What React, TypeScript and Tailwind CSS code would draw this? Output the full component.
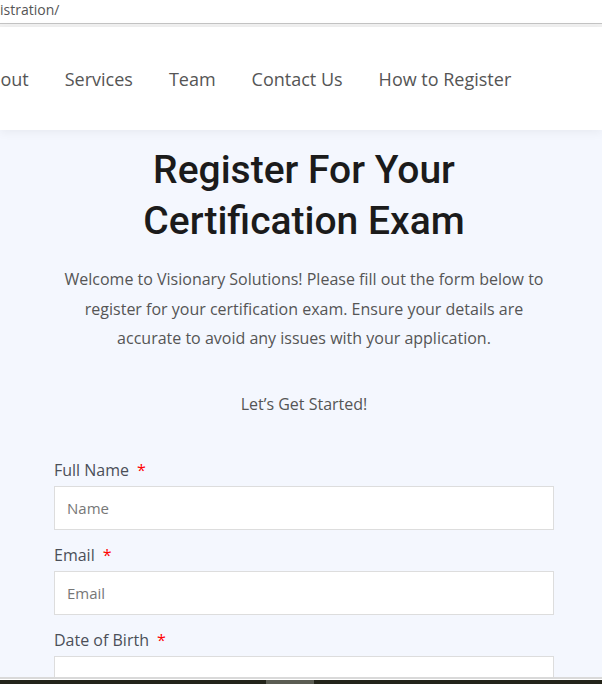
const navItems = ["About", "Services", "Team", "Contact Us", "How to Register"];

type FieldProps = {
  label: string;
  placeholder?: string;
};

function Field({ label, placeholder }: FieldProps) {
  return (
    <div className="flex flex-col">
      <label className="mb-[6px] text-[16px] leading-[20px] text-[#4b4f58]">
        {label}
        <span className="ml-[8px] text-[#ff0000]">*</span>
      </label>
      <input
        type="text"
        placeholder={placeholder}
        className="h-[44px] w-full border border-[#dddddd] bg-white px-[12px] text-[15px] text-[#333] placeholder:text-[#777777] focus:outline-none"
      />
    </div>
  );
}

export default function App() {
  return (
    <div
      className="flex h-[684px] w-[602px] flex-col overflow-hidden bg-[#f4f7fe]"
      style={{ fontFamily: '"Open Sans", "Liberation Sans", sans-serif' }}
    >
      {/* browser url strip */}
      <div className="h-[23px] shrink-0 bg-white text-[14px] leading-[19px] text-[#555]">
        <span>istration/</span>
      </div>
      <div className="h-[1px] shrink-0 bg-[#c4c4c4]" />
      <div className="h-[3px] shrink-0 bg-[#f1f1f1]" />

      {/* site header */}
      <header className="relative z-10 h-[103px] shrink-0 overflow-hidden bg-white shadow-[0_2px_10px_rgba(0,0,0,0.06)]">
        <nav className="ml-[-22px] flex h-full items-center gap-[36px] pt-[2px] text-[18px] text-[#555555]">
          {navItems.map((item) => (
            <a key={item} className="whitespace-nowrap">
              {item}
            </a>
          ))}
        </nav>
      </header>

      <main className="flex-1 overflow-hidden pl-[54px]">
        <div className="w-[500px] pt-[15px] text-center">
          <h1
            className="text-[39px] font-medium leading-[51px] text-[#1b1b1b]"
            style={{ fontFamily: 'Roboto, "Liberation Sans", sans-serif' }}
          >
            Register For Your
            <br />
            Certification Exam
          </h1>
          <p className="mt-[18px] text-[16px] leading-[29.5px] text-[#555555]">
            Welcome to Visionary Solutions! Please fill out the form below to register for your certification exam. Ensure your details are accurate to avoid any issues with your application.
          </p>
          <p className="mt-[36px] text-[16px] leading-[29px] text-[#555555]">Let’s Get Started!</p>
        </div>

        <form className="mt-[41px] flex w-[500px] flex-col gap-[15px]">
          <Field label="Full Name" placeholder="Name" />
          <Field label="Email" placeholder="Email" />
          <Field label="Date of Birth" />
        </form>
      </main>

      {/* window bottom edge */}
      <div className="h-[2px] shrink-0 bg-[#d9d9d9]" />
      <div className="h-[1px] shrink-0 bg-white" />
      <div className="flex h-[4px] shrink-0 bg-[#23241a]">
        <div className="ml-[266px] w-[48px] bg-[#5b5c52]" />
      </div>
    </div>
  );
}
